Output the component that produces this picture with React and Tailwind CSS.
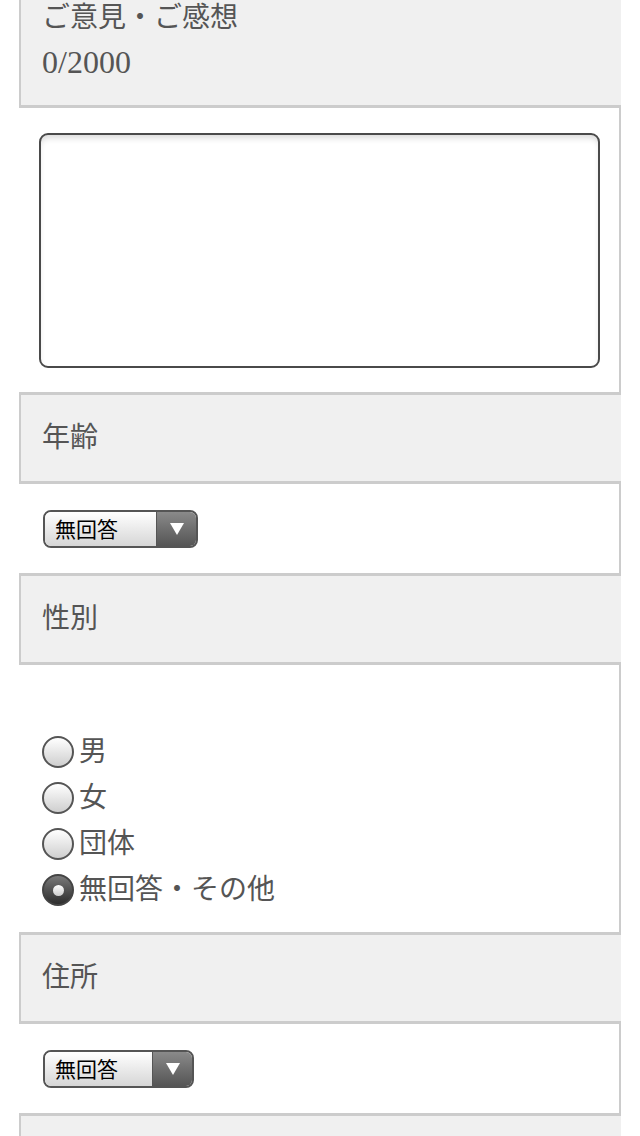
import React from 'react';

const serif = "font-['Liberation_Serif','Noto_Sans_CJK_JP',serif]";

function Head({ children }) {
  return (
    <div className={`bg-[#f0f0f0] border-l-2 border-y-[3px] border-[#cccccc] pl-[21px] py-[21px] text-[28px] leading-[44px] text-[#555] ${serif}`}>
      {children}
    </div>
  );
}

function Body({ className = '', children }) {
  return <div className={`border-r-2 border-[#cccccc] bg-white ${className}`}>{children}</div>;
}

function SelectBox({ width }) {
  return (
    <div className={`flex h-[38px] ${width} rounded-[8px] border-2 border-[#555] overflow-hidden`}>
      <div className="flex-1 bg-linear-to-b from-white to-[#d6d6d6] flex items-center pl-[10px] text-[21px] text-black font-['Noto_Sans_CJK_JP',sans-serif]">
        無回答
      </div>
      <div className="w-[40px] bg-linear-to-b from-[#8a8a8a] to-[#555] grid place-items-center border-l border-[#555]">
        <svg width="14" height="12" viewBox="0 0 14 12"><polygon points="0,0 14,0 7,12" fill="#fff" /></svg>
      </div>
    </div>
  );
}

function Radio({ label, checked }) {
  return (
    <div className="flex items-center h-[46px]">
      {checked ? (
        <span className="ml-[23px] h-[32px] w-[32px] rounded-full border-2 border-[#444] bg-linear-to-b from-[#7a7a7a] to-[#2e2e2e] grid place-items-center">
          <span className="h-[11px] w-[11px] rounded-full bg-linear-to-b from-white to-[#ccc]" />
        </span>
      ) : (
        <span className="ml-[23px] h-[32px] w-[32px] rounded-full border-2 border-[#555] bg-linear-to-b from-white to-[#cfcfcf]" />
      )}
      <span className={`ml-[5px] text-[28px] text-[#555] ${serif}`}>{label}</span>
    </div>
  );
}

export default function App() {
  return (
    <div className="bg-white min-h-[1136px] h-[1136px] overflow-hidden">
      <div className="ml-[19px] w-[602px] -mt-[28px]">
        <Head>
          <div>ご意見・ご感想</div>
          <div className="text-[32px]">0/2000</div>
        </Head>
        <Body className="pt-[25px] pb-[24px] pl-[20px]">
          <div className="h-[235px] w-[561px] rounded-[9px] border-2 border-[#4a4a4a] bg-white shadow-[inset_0_5px_6px_-2px_rgba(0,0,0,0.15)]" />
        </Body>
        <Head>年齢</Head>
        <Body className="pt-[26px] pb-[25px] pl-[24px]">
          <SelectBox width="w-[155px]" />
        </Body>
        <Head>性別</Head>
        <Body className="pt-[64px] pb-[19px]">
          <Radio label="男" />
          <Radio label="女" />
          <Radio label="団体" />
          <Radio label="無回答・その他" checked />
        </Body>
        <Head>住所</Head>
        <Body className="pt-[26px] pb-[25px] pl-[24px]">
          <SelectBox width="w-[151px]" />
        </Body>
        <Head>&nbsp;</Head>
      </div>
    </div>
  );
}
